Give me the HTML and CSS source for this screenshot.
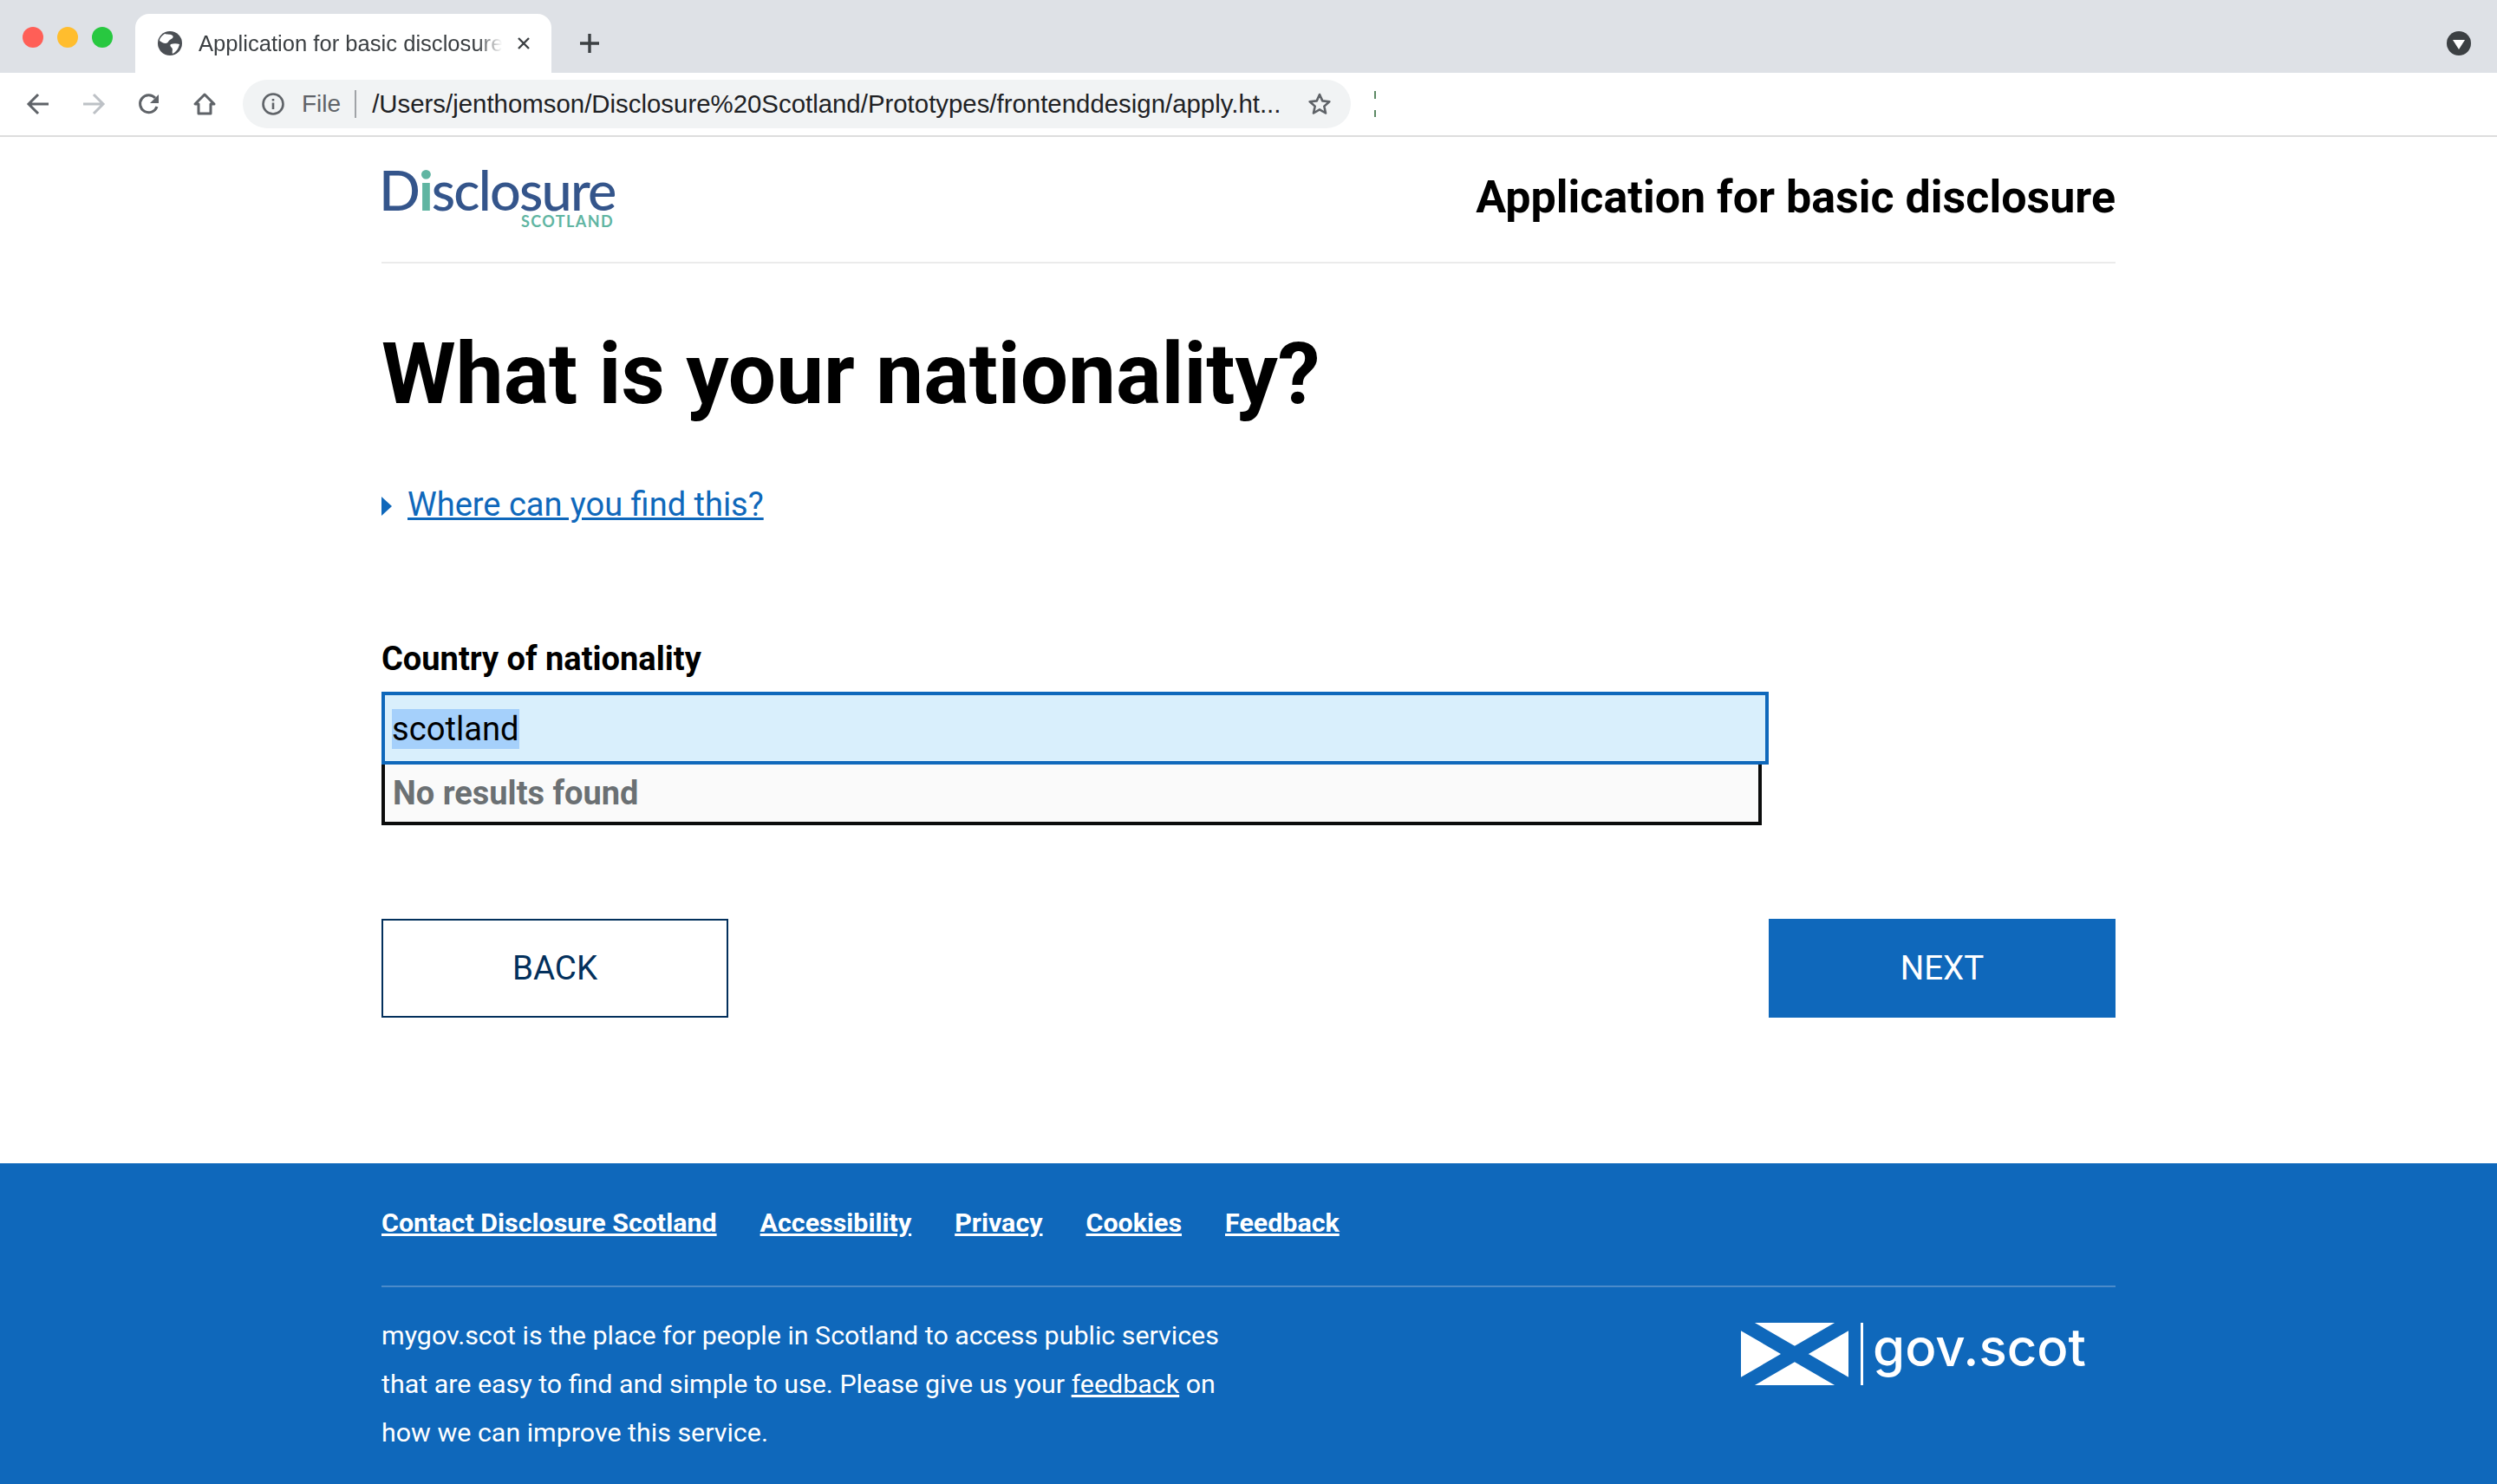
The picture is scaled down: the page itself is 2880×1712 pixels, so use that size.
FILE: index.html
```html
<!DOCTYPE html>
<html lang="en">
<head>
    <meta charset="UTF-8">
    <title>Application for basic disclosure</title>
    <link rel="stylesheet" href="styles.css">
</head>
<body>

    <!-- Browser window chrome -->
    <div class="tab-strip">
        <div class="traffic-lights">
            <span class="light light-red"></span>
            <span class="light light-yellow"></span>
            <span class="light light-green"></span>
        </div>
        <div class="tab">
            <svg class="favicon" viewBox="0 0 28 28">
                <circle cx="14" cy="14" r="14" fill="#4b4f54"/>
                <path d="M8 3c3 1 7 0 9 2s-1 4-3 5-2 4-5 4-5-2-7-3c0-3 3-6 6-8zM15 15c3-1 7-1 10 0-1 5-4 9-8 11-1-3 1-5-1-7s-2-3-1-4z" fill="#fff"/>
            </svg>
            <span class="tab-title">Application for basic disclosure</span>
            <svg class="tab-close" viewBox="0 0 16 16"><path d="M2 2l12 12M14 2L2 14" stroke="#3c4043" stroke-width="2.4" fill="none"/></svg>
        </div>
        <svg class="new-tab" viewBox="0 0 24 24"><path d="M12 1v22M1 12h22" stroke="#3c4043" stroke-width="3.4" fill="none"/></svg>
        <svg class="profile" viewBox="0 0 28 28">
            <circle cx="14" cy="14" r="14" fill="#3c4043"/>
            <path d="M7 10h14l-7 11z" fill="#fff"/>
        </svg>
    </div>

    <div class="toolbar">
        <svg class="tool-icon" viewBox="0 0 28 28"><path d="M26 14H4M14 3L3 14l11 11" stroke="#5f6368" stroke-width="3" fill="none"/></svg>
        <svg class="tool-icon" viewBox="0 0 28 28"><path d="M2 14h22M14 3l11 11-11 11" stroke="#bdc1c6" stroke-width="3" fill="none"/></svg>
        <svg class="tool-icon" viewBox="0 0 28 28"><path d="M23 17a10 10 0 1 1-2-10" stroke="#5f6368" stroke-width="3" fill="none"/><path d="M25 3v10H15z" fill="#5f6368"/></svg>
        <svg class="tool-icon" viewBox="0 0 28 28"><path d="M14 3L3 14h4v11h14V14h4z" stroke="#5f6368" stroke-width="3" fill="none" stroke-linejoin="round"/></svg>
        <div class="omnibox">
            <svg class="info-icon" viewBox="0 0 26 26">
                <circle cx="13" cy="13" r="11.5" stroke="#5f6368" stroke-width="2.6" fill="none"/>
                <path d="M13 11.5v7.5M13 7v2.6" stroke="#5f6368" stroke-width="2.6" fill="none"/>
            </svg>
            <span class="omni-file">File</span>
            <span class="omni-divider"></span>
            <span class="omni-url">/Users/jenthomson/Disclosure%20Scotland/Prototypes/frontenddesign/apply.ht...</span>
            <svg class="star-icon" viewBox="0 0 28 28"><path d="M14 3l3.3 7.4 8 .8-6 5.4 1.7 7.9-7-4.1-7 4.1 1.700-7.900-6-5.400 8-.8z" stroke="#5f6368" stroke-width="2.600" fill="none" stroke-linejoin="round"/></svg>
        </div>
        <span class="toolbar-marks"></span>
    </div>

    <!-- Page -->
    <div class="page">
        <header class="site-header">
            <div class="logo">
                <div class="logo-word">D<span class="logo-i">i</span>sclosure</div>
                <div class="logo-sub">SCOTLAND</div>
            </div>
            <div class="service-name">Application for basic disclosure</div>
        </header>

        <main>
            <h1>What is your nationality?</h1>

            <div class="details">
                <span class="details-arrow"></span>
                <a class="details-link" href="#">Where can you find this?</a>
            </div>

            <label class="field-label" for="country">Country of nationality</label>
            <div class="input-box" id="country"><span class="selected-text">scotland</span></div>
            <div class="no-results">No results found</div>

            <div class="actions">
                <a class="btn btn-back" href="#">BACK</a>
                <a class="btn btn-next" href="#">NEXT</a>
            </div>
        </main>
    </div>

    <footer class="site-footer">
        <div class="page">
            <nav class="footer-links">
                <a href="#">Contact Disclosure Scotland</a>
                <a href="#">Accessibility</a>
                <a href="#">Privacy</a>
                <a href="#">Cookies</a>
                <a href="#">Feedback</a>
            </nav>
            <div class="footer-main">
                <p class="footer-text">mygov.scot is the place for people in Scotland to access public services that are easy to find and simple to use. Please give us your <a href="#">feedback</a> on how we can improve this service.</p>
                <div class="gov-logo">
                    <svg class="saltire" viewBox="0 0 124 72">
                        <rect width="124" height="72" fill="#fff"/>
                        <path d="M0 0l124 72M124 0L0 72" stroke="#0f68bb" stroke-width="16" fill="none"/>
                    </svg>
                    <span class="gov-divider"></span>
                    <span class="gov-name">gov.scot</span>
                </div>
            </div>
        </div>
    </footer>

</body>
</html>
```

FILE: styles.css
```css
* {
    box-sizing: border-box;
}
body {
    margin: 0;
    background-color: #ffffff;
    color: #000000;
    font-family: Roboto, Arial, sans-serif;
}

/* Browser chrome */
.tab-strip {
    display: flex;
    align-items: flex-end;
    height: 84px;
    background-color: #dee1e6;
}
.traffic-lights {
    display: flex;
    gap: 16px;
    width: 156px;
    height: 68px;
    padding: 15px 0 0 26px;
}
.light {
    width: 24px;
    height: 24px;
    border-radius: 50%;
}
.light-red { background-color: #ff5f57; }
.light-yellow { background-color: #ffbd2e; }
.light-green { background-color: #28c840; }
.tab {
    display: flex;
    align-items: center;
    width: 480px;
    height: 68px;
    padding: 0 24px 0 26px;
    background-color: #ffffff;
    border-radius: 16px 16px 0 0;
}
.favicon {
    width: 28px;
    height: 28px;
    flex: none;
}
.tab-title {
    width: 350px;
    margin-left: 19px;
    overflow: hidden;
    white-space: nowrap;
    font-family: "Liberation Sans", Arial, sans-serif;
    font-size: 25.6px;
    color: #3c4043;
    -webkit-mask-image: linear-gradient(to right, #000 92%, transparent 100%);
}
.tab-close {
    width: 16px;
    height: 16px;
    margin-left: 17px;
    flex: none;
}
.new-tab {
    width: 24px;
    height: 24px;
    margin: 0 0 22px 32px;
}
.profile {
    width: 28px;
    height: 28px;
    margin: 0 30px 20px auto;
}
.toolbar {
    display: flex;
    align-items: center;
    height: 74px;
    padding: 0 0 0 30px;
    border-bottom: 2px solid #dddddd;
}
.tool-icon {
    width: 28px;
    height: 28px;
    margin-right: 36px;
    flex: none;
}
.omnibox {
    display: flex;
    align-items: center;
    width: 1278px;
    height: 56px;
    margin-left: -6px;
    padding: 0 22px;
    background-color: #f1f3f4;
    border-radius: 28px;
    font-family: "Liberation Sans", Arial, sans-serif;
}
.info-icon {
    width: 26px;
    height: 26px;
    flex: none;
}
.omni-file {
    margin-left: 20px;
    font-size: 28px;
    color: #5f6368;
}
.omni-divider {
    width: 2px;
    height: 32px;
    margin: 0 18px 0 16px;
    background-color: #a0a3a7;
}
.omni-url {
    font-size: 29.4px;
    white-space: nowrap;
    color: #202124;
}
.star-icon {
    width: 28px;
    height: 28px;
    margin-left: auto;
    flex: none;
}
.toolbar-marks {
    width: 2px;
    height: 30px;
    margin-left: 27px;
    background: linear-gradient(#5d8a66 0 9px, transparent 9px 22px, #5d8a66 22px 30px);
}

/* Page */
.page {
    width: 2000px;
    margin: 0 auto;
}
.site-header {
    display: flex;
    justify-content: space-between;
    align-items: center;
    height: 146px;
    border-bottom: 2px solid #ebebeb;
}
.logo {
    width: 268px;
    margin-bottom: 8px;
    font-family: Lato, sans-serif;
}
.logo-word {
    margin-left: -3px;
    font-size: 63px;
    line-height: 62px;
    font-weight: 500;
    letter-spacing: -1.8px;
    color: #34558b;
}
.logo-i {
    font-weight: 900;
    color: #60b5a2;
}
.logo-sub {
    margin-top: -4px;
    font-size: 18px;
    line-height: 18px;
    font-weight: 700;
    letter-spacing: 1.4px;
    text-align: right;
    color: #60b5a2;
}
.service-name {
    font-size: 52px;
    font-weight: 700;
    margin-bottom: 6px;
}
h1 {
    margin: 70px 0 0;
    font-size: 98px;
    line-height: 116px;
    font-weight: 700;
}
.details {
    display: flex;
    align-items: center;
    margin-top: 66px;
    color: #0f68bb;
}
.details-arrow {
    width: 0;
    height: 0;
    border-left: 12px solid #0f68bb;
    border-top: 11px solid transparent;
    border-bottom: 11px solid transparent;
    margin-top: 4px;
}
.details-link {
    margin-left: 18px;
    font-size: 38px;
    line-height: 52px;
    color: #0f68bb;
}
.field-label {
    display: block;
    margin-top: 127px;
    font-size: 38px;
    line-height: 50px;
    font-weight: 700;
}
.input-box {
    width: 1600px;
    height: 84px;
    margin-top: 13px;
    padding: 16px 8px;
    background-color: #d9effc;
    border: 4px solid #0f68bb;
    font-size: 38.2px;
    line-height: 46px;
}
.selected-text {
    display: inline-block;
    background-color: #a5d0fb;
}
.no-results {
    width: 1592px;
    height: 70px;
    padding: 0 9px;
    background-color: #fafafa;
    border: 4px solid #0b0c0c;
    border-top: none;
    font-size: 38px;
    line-height: 66px;
    font-weight: 700;
    color: #6b7073;
}
.actions {
    display: flex;
    justify-content: space-between;
    margin-top: 108px;
    margin-bottom: 168px;
}
.btn {
    width: 400px;
    height: 114px;
    font-size: 38.5px;
    line-height: 114px;
    text-align: center;
    text-decoration: none;
}
.btn-back {
    line-height: 110px;
    border: 2px solid #03305c;
    color: #03305c;
}
.btn-next {
    background-color: #0f68bb;
    color: #ffffff;
}

/* Footer */
.site-footer {
    height: 370px;
    background-color: #0f68bb;
    color: #ffffff;
}
.footer-links {
    display: flex;
    gap: 50px;
    height: 143px;
    padding-top: 50px;
    border-bottom: 2px solid #4b8bca;
}
.footer-links a {
    font-size: 30.4px;
    line-height: 38px;
    font-weight: 700;
    color: #ffffff;
}
.footer-main {
    display: flex;
    justify-content: space-between;
    align-items: flex-start;
}
.footer-text {
    width: 1000px;
    margin: 28px 0 0;
    font-size: 30.4px;
    line-height: 56px;
}
.footer-text a {
    color: #ffffff;
}
.gov-logo {
    display: flex;
    align-items: center;
    margin: 41px 34px 0 0;
}
.saltire {
    width: 124px;
    height: 72px;
}
.gov-divider {
    width: 3px;
    height: 72px;
    margin: 0 11px 0 14px;
    background-color: #ffffff;
}
.gov-name {
    margin-bottom: 16px;
    font-family: Inter, sans-serif;
    font-size: 60px;
    line-height: 56px;
    font-weight: 500;
    color: #ffffff;
}
```
